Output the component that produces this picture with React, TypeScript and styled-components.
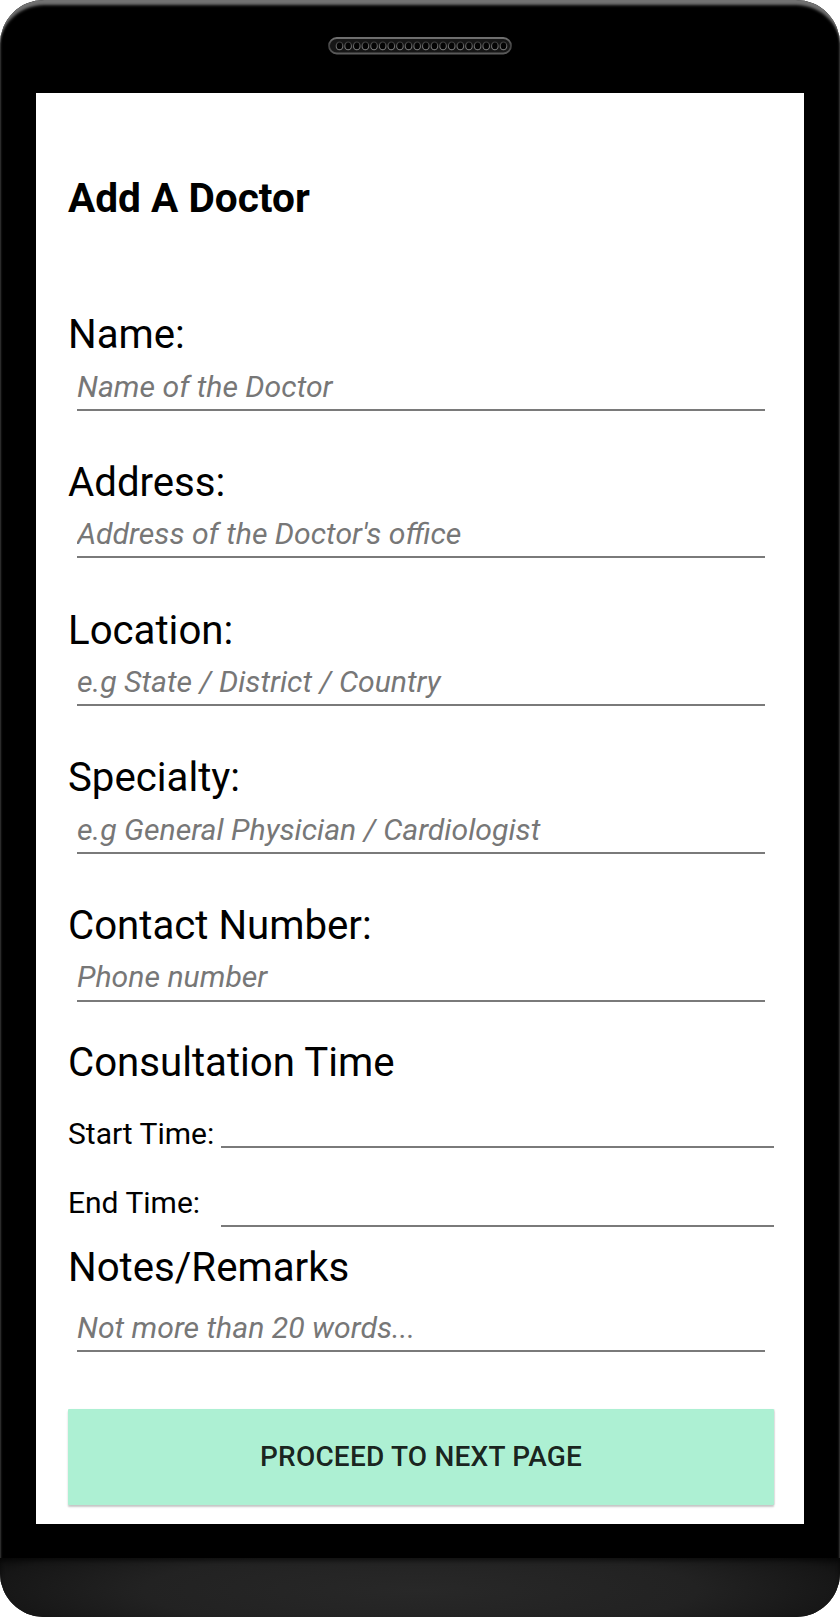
import React from "react";
import styled, { createGlobalStyle } from "styled-components";

const GlobalStyle = createGlobalStyle`
  html, body {
    margin: 0;
    padding: 0;
    background: #ffffff;
  }
  body {
    font-family: Roboto, "Noto Sans", "Liberation Sans", sans-serif;
  }
  * { box-sizing: border-box; }
`;

const Phone = styled.div`
  width: 840px;
  height: 1617px;
  background: #000;
  border-radius: 44px;
  overflow: hidden;
  display: flex;
  flex-direction: column;
  box-shadow:
    inset 0 7px 3px -2px rgba(120, 120, 120, 0.95),
    inset 2px 0 2px -1px rgba(70, 70, 70, 0.8),
    inset -2px 0 2px -1px rgba(70, 70, 70, 0.8);
`;

const Bezel = styled.div`
  height: 93px;
  flex: none;
  display: flex;
  justify-content: center;
  align-items: flex-start;
  padding-top: 37px;
  padding-right: 1px;
`;

const Screen = styled.main`
  flex: none;
  height: 1431px;
  margin: 0 36px;
  background: #ffffff;
  padding: 84.7px 30px 0 32px;
  display: flex;
  flex-direction: column;
`;

const Title = styled.h1`
  margin: 0;
  font-size: 40.6px;
  line-height: 40.6px;
  font-weight: 700;
  color: #000;
  font-family: Roboto, sans-serif;
`;

const Group = styled.div<{ $top: number }>`
  display: flex;
  flex-direction: column;
  margin-top: ${(p) => p.$top}px;
`;

const Label = styled.label<{ $top?: number }>`
  display: block;
  margin-top: ${(p) => p.$top ?? 0}px;
  font-size: 40.2px;
  line-height: 40px;
  font-weight: 400;
  color: #000;
  font-family: Roboto, sans-serif;
`;

const Field = styled.input<{ $top: number; $pad: number }>`
  display: block;
  box-sizing: content-box;
  width: calc(100% - 18px);
  height: 30px;
  margin: ${(p) => p.$top}px 9px 0;
  padding: 0 0 ${(p) => p.$pad}px 0;
  border: none;
  border-bottom: 2px solid #7a7a7a;
  border-radius: 0;
  outline: none;
  background: transparent;
  font-family: Roboto, sans-serif;
  font-style: italic;
  font-size: 30.2px;
  line-height: 30px;
  color: #000;
  &::placeholder {
    color: #777777;
    opacity: 1;
  }
`;

const TimeRow = styled.div<{ $top: number }>`
  display: flex;
  align-items: flex-end;
  gap: 10px;
  margin-top: ${(p) => p.$top}px;
`;

const TimeLabel = styled.label<{ $pad: number }>`
  flex: none;
  width: 143px;
  font-size: 30px;
  line-height: 30px;
  color: #000;
  font-family: Roboto, sans-serif;
  padding-bottom: ${(p) => p.$pad}px;
  white-space: nowrap;
`;

const TimeLine = styled.div<{ $lift: number }>`
  flex: 1;
  height: 2px;
  background: #7a7a7a;
  margin-bottom: ${(p) => p.$lift}px;
`;

const Button = styled.button`
  margin-top: 57px;
  height: 96px;
  width: 100%;
  flex: none;
  border: none;
  border-radius: 1px;
  background: #adf0d3;
  box-shadow: 0 2px 2px rgba(0, 0, 0, 0.22), 1px 0 1px rgba(0, 0, 0, 0.08);
  font-family: Roboto, sans-serif;
  font-weight: 500;
  font-size: 28px;
  letter-spacing: 0.2px;
  color: rgba(0, 0, 0, 0.87);
  text-transform: uppercase;
  cursor: pointer;
`;

const Gap = styled.div`
  flex: none;
  height: 34px;
`;

const Chin = styled.div`
  flex: none;
  height: 59px;
  background:
    radial-gradient(ellipse 60% 120% at 50% 55%, rgba(40, 40, 40, 1) 0%, rgba(34, 34, 34, 1) 55%, rgba(22, 22, 22, 1) 85%, rgba(8, 8, 8, 1) 100%);
  box-shadow: inset 0 3px 4px rgba(0, 0, 0, 0.5);
`;

const Speaker = () => {
  const holes = Array.from({ length: 20 }, (_, i) => 11.5 + i * 8.63);
  return (
    <svg width="184" height="18" viewBox="0 0 184 18" aria-hidden>
      <defs>
        <linearGradient id="spk" x1="0" y1="0" x2="0" y2="1">
          <stop offset="0" stopColor="#707070" />
          <stop offset="0.5" stopColor="#404040" />
          <stop offset="1" stopColor="#5a5a5a" />
        </linearGradient>
        <linearGradient id="hole" x1="0" y1="0" x2="0" y2="1">
          <stop offset="0" stopColor="#3c3c3c" />
          <stop offset="1" stopColor="#8a8a8a" />
        </linearGradient>
      </defs>
      <rect x="1" y="1" width="182" height="15.5" rx="7.75" fill="#161616" stroke="url(#spk)" strokeWidth="1.8" />
      {holes.map((cx) => (
        <ellipse key={cx} cx={cx} cy="8.9" rx="3.3" ry="3.9" fill="#040404" stroke="url(#hole)" strokeWidth="1.1" />
      ))}
    </svg>
  );
};

const fields = [
  { label: "Name:", placeholder: "Name of the Doctor" },
  { label: "Address:", placeholder: "Address of the Doctor's office" },
  { label: "Location:", placeholder: "e.g State / District / Country" },
  { label: "Specialty:", placeholder: "e.g General Physician / Cardiologist" },
  { label: "Contact Number:", placeholder: "Phone number" },
];

export default function App() {
  return (
    <>
      <GlobalStyle />
      <Phone>
        <Bezel>
          <Speaker />
        </Bezel>
        <Screen>
          <Title>Add A Doctor</Title>
          {fields.map((f, i) => (
            <Group key={f.label} $top={i === 0 ? 97.1 : 52.3}>
              <Label>{f.label}</Label>
              <Field $top={15.65} $pad={7.75} placeholder={f.placeholder} />
            </Group>
          ))}
          <Label $top={41.2}>Consultation Time</Label>
          <TimeRow $top={36.75}>
            <TimeLabel $pad={0}>Start Time:</TimeLabel>
            <TimeLine $lift={1.75} />
          </TimeRow>
          <TimeRow $top={38.3}>
            <TimeLabel $pad={9.45}>End Time:</TimeLabel>
            <TimeLine $lift={0} />
          </TimeRow>
          <Group $top={21.3}>
            <Label>Notes/Remarks</Label>
            <Field $top={24.4} $pad={6.75} placeholder="Not more than 20 words..." />
          </Group>
          <Button type="button">Proceed to next page</Button>
        </Screen>
        <Gap />
        <Chin />
      </Phone>
    </>
  );
}
